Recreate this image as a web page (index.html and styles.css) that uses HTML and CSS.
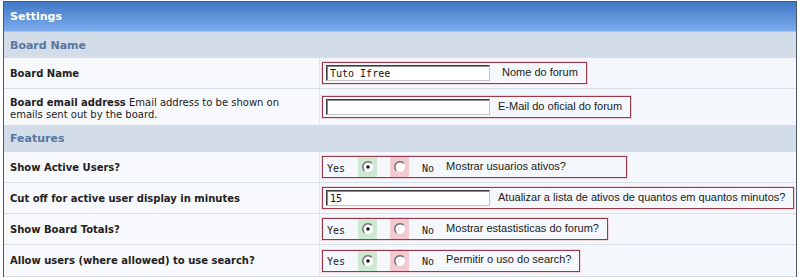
FILE: index.html
```html
<!DOCTYPE html>
<html lang="en">
<head>
<meta charset="utf-8">
<title>Settings</title>
<link rel="stylesheet" href="styles.css">
</head>
<body>
	<div class="settings">
		<div class="settings_title">Settings</div>

		<div class="settings_section">Board Name</div>
		<div class="settings_row">
			<div class="settings_label"><b>Board Name</b></div>
			<div class="settings_field">
				<span class="box">
					<input class="text" type="text" value="Tuto Ifree">
					<span class="hint">Nome do forum</span>
				</span>
			</div>
		</div>
		<div class="settings_row tall">
			<div class="settings_label">
				<div class="lines">
					<div><b>Board email address</b> <span>Email address to be shown on</span></div>
					<div>emails sent out by the board.</div>
				</div>
			</div>
			<div class="settings_field">
				<span class="box">
					<input class="text" type="text" value="">
					<span class="hint hint_near">E-Mail do oficial do forum</span>
				</span>
			</div>
		</div>

		<div class="settings_section features">Features</div>
		<div class="settings_row">
			<div class="settings_label"><b>Show Active Users?</b></div>
			<div class="settings_field">
				<span class="box radios wide">
					<span class="yn">Yes</span>
					<span class="cell cell_yes"><svg width="12" height="12" viewBox="0 0 12 12"><circle cx="6" cy="6" r="5" fill="#fff"/><path d="M2.3 9.7A5 5 0 0 1 9.7 2.3" fill="none" stroke="#6a6a6a" stroke-width="1.4"/><circle cx="6" cy="6" r="1.7" fill="#111"/></svg></span>
					<span class="cell cell_no"><svg width="12" height="12" viewBox="0 0 12 12"><circle cx="6" cy="6" r="5" fill="#fff"/><path d="M2.3 9.7A5 5 0 0 1 9.7 2.3" fill="none" stroke="#6a6a6a" stroke-width="1.4"/></svg></span>
					<span class="yn">No</span>
					<span class="hint">Mostrar usuarios ativos?</span>
				</span>
			</div>
		</div>
		<div class="settings_row">
			<div class="settings_label"><b>Cut off for active user display in minutes</b></div>
			<div class="settings_field">
				<span class="box">
					<input class="text" type="text" value="15">
					<span class="hint hint_near">Atualizar a lista de ativos de quantos em quantos minutos?</span>
				</span>
			</div>
		</div>
		<div class="settings_row">
			<div class="settings_label"><b>Show Board Totals?</b></div>
			<div class="settings_field">
				<span class="box radios">
					<span class="yn">Yes</span>
					<span class="cell cell_yes"><svg width="12" height="12" viewBox="0 0 12 12"><circle cx="6" cy="6" r="5" fill="#fff"/><path d="M2.3 9.7A5 5 0 0 1 9.7 2.3" fill="none" stroke="#6a6a6a" stroke-width="1.4"/><circle cx="6" cy="6" r="1.7" fill="#111"/></svg></span>
					<span class="cell cell_no"><svg width="12" height="12" viewBox="0 0 12 12"><circle cx="6" cy="6" r="5" fill="#fff"/><path d="M2.3 9.7A5 5 0 0 1 9.7 2.3" fill="none" stroke="#6a6a6a" stroke-width="1.4"/></svg></span>
					<span class="yn">No</span>
					<span class="hint">Mostrar estastisticas do forum?</span>
				</span>
			</div>
		</div>
		<div class="settings_row last">
			<div class="settings_label"><b>Allow users (where allowed) to use search?</b></div>
			<div class="settings_field">
				<span class="box radios">
					<span class="yn">Yes</span>
					<span class="cell cell_yes"><svg width="12" height="12" viewBox="0 0 12 12"><circle cx="6" cy="6" r="5" fill="#fff"/><path d="M2.3 9.7A5 5 0 0 1 9.7 2.3" fill="none" stroke="#6a6a6a" stroke-width="1.4"/><circle cx="6" cy="6" r="1.7" fill="#111"/></svg></span>
					<span class="cell cell_no"><svg width="12" height="12" viewBox="0 0 12 12"><circle cx="6" cy="6" r="5" fill="#fff"/><path d="M2.3 9.7A5 5 0 0 1 9.7 2.3" fill="none" stroke="#6a6a6a" stroke-width="1.4"/></svg></span>
					<span class="yn">No</span>
					<span class="hint">Permitir o uso do search?</span>
				</span>
			</div>
		</div>
	</div>
</body>
</html>
```

FILE: styles.css
```css
html {
	background: #fff;
}
body {
	margin: 0;
	padding: 1px 0 0 3px;
	font: normal 10px "DejaVu Sans", Verdana, sans-serif;
	color: #222;
}

/* SETTINGS PANEL */
.settings {
	width: 792px;
	border: 1px solid #4a5a6e;
	border-bottom: 0;
	background: #f4f7fb;
}
.settings_title {
	height: 29px;
	padding-left: 6px;
	display: flex;
	align-items: center;
	background: linear-gradient(#4178c6, #7caced);
	border-bottom: 1px solid #a9c3e4;
	color: #fff;
	font-weight: bold;
	font-size: 11px;
}
.settings_section {
	height: 26px;
	padding-left: 6px;
	display: flex;
	align-items: center;
	background: #d3dde9;
	color: #5676a2;
	font-weight: bold;
	font-size: 11px;
}
.settings_section.features {
	height: 27px;
}
.settings_row {
	display: grid;
	grid-template-columns: 316px 1fr;
	height: 30px;
	border-bottom: 1px solid #d6dee8;
}
.settings_row.tall {
	height: 36px;
	border-bottom: 0;
}
.settings_row.tall .settings_label {
	padding-top: 4px;
}
.settings_row.last {
	height: 31px;
}
.settings_label {
	display: flex;
	align-items: center;
	padding: 0 6px;
	background: #f8f9fc;
	border-right: 1px solid #e1e7ef;
}
.settings_label .lines {
	line-height: 12px;
}
.settings_field {
	display: flex;
	align-items: center;
	padding-left: 2px;
}

/* red framed option box */
.box {
	display: inline-flex;
	align-items: center;
	height: 20px;
	padding: 0 8px 0 3px;
	border: 1px solid #9d3848;
	box-shadow: 0 0 0 1px #f0d6da;
}
.text {
	box-sizing: border-box;
	width: 164px;
	height: 16px;
	margin: 0;
	padding: 0 3px;
	background: #fff;
	border: 1px solid;
	border-color: #3c3c3c #c4c4c4 #c4c4c4 #3c3c3c;
	box-shadow: inset 1px 1px 0 #8a8a8a;
	font: 10px "DejaVu Sans Mono", monospace;
	color: #111;
	outline: none;
}
.hint {
	margin-left: 12px;
	margin-top: -3px;
	font: 11px "Liberation Sans", Arial, sans-serif;
	color: #222;
}
.hint_near {
	margin-left: 8px;
}
.radios {
	height: 20px;
	padding-left: 4px;
	gap: 13px;
}
.radios .hint {
	margin-left: -1px;
}
.radios.wide {
	padding-right: 60px;
}
.yn {
	font: 10px "DejaVu Sans Mono", monospace;
	color: #222;
	padding-top: 2px;
}
.cell {
	width: 19px;
	align-self: stretch;
	display: flex;
	align-items: center;
	justify-content: center;
}
.cell_yes {
	background: #cfe8d4;
}
.cell_no {
	background: #f3cacf;
}
```
